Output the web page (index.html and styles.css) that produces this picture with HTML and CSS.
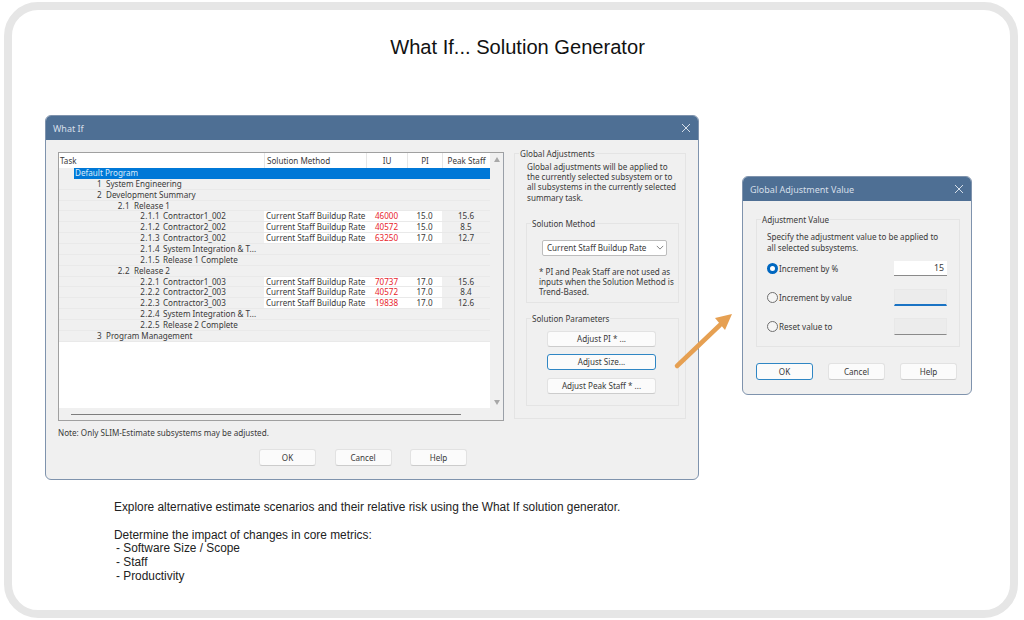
FILE: index.html
```html
<!DOCTYPE html>
<html lang="en">
<head>
    <meta charset="UTF-8">
    <title>What If... Solution Generator</title>
    <link rel="stylesheet" href="styles.css">
</head>
<body>
    <div class="frame">
        <h1>What If... Solution Generator</h1>

        <div class="window what-if">
            <div class="titlebar">
                <span>What If</span>
                <svg class="close" viewBox="0 0 10 10"><path d="M1 1L9 9M9 1L1 9"/></svg>
            </div>
            <div class="what-if-body">
                <div class="list-column">
                    <div class="listbox">
                        <div class="list-main">
                            <div class="row head">
                                <div class="c-task">Task</div>
                                <div class="c-method">Solution Method</div>
                                <div class="c-iu">IU</div>
                                <div class="c-pi">PI</div>
                                <div class="c-staff">Peak Staff</div>
                            </div>
                            <div class="row selected"><div class="c-task"><span class="sel-label">Default Program</span></div></div>
                            <div class="row"><div class="c-task l1"><span class="num">1</span>System Engineering</div></div>
                            <div class="row"><div class="c-task l1"><span class="num">2</span>Development Summary</div></div>
                            <div class="row"><div class="c-task l2"><span class="num">2.1</span>Release 1</div></div>
                            <div class="row data"><div class="c-task l3"><span class="num">2.1.1</span>Contractor1_002</div><div class="c-method">Current Staff Buildup Rate</div><div class="c-iu">46000</div><div class="c-pi">15.0</div><div class="c-staff">15.6</div></div>
                            <div class="row data"><div class="c-task l3"><span class="num">2.1.2</span>Contractor2_002</div><div class="c-method">Current Staff Buildup Rate</div><div class="c-iu">40572</div><div class="c-pi">15.0</div><div class="c-staff">8.5</div></div>
                            <div class="row data"><div class="c-task l3"><span class="num">2.1.3</span>Contractor3_002</div><div class="c-method">Current Staff Buildup Rate</div><div class="c-iu">63250</div><div class="c-pi">17.0</div><div class="c-staff">12.7</div></div>
                            <div class="row"><div class="c-task l3"><span class="num">2.1.4</span>System Integration &amp; T...</div></div>
                            <div class="row"><div class="c-task l3"><span class="num">2.1.5</span>Release 1 Complete</div></div>
                            <div class="row"><div class="c-task l2"><span class="num">2.2</span>Release 2</div></div>
                            <div class="row data"><div class="c-task l3"><span class="num">2.2.1</span>Contractor1_003</div><div class="c-method">Current Staff Buildup Rate</div><div class="c-iu">70737</div><div class="c-pi">17.0</div><div class="c-staff">15.6</div></div>
                            <div class="row data"><div class="c-task l3"><span class="num">2.2.2</span>Contractor2_003</div><div class="c-method">Current Staff Buildup Rate</div><div class="c-iu">40572</div><div class="c-pi">17.0</div><div class="c-staff">8.4</div></div>
                            <div class="row data"><div class="c-task l3"><span class="num">2.2.3</span>Contractor3_003</div><div class="c-method">Current Staff Buildup Rate</div><div class="c-iu">19838</div><div class="c-pi">17.0</div><div class="c-staff">12.6</div></div>
                            <div class="row"><div class="c-task l3"><span class="num">2.2.4</span>System Integration &amp; T...</div></div>
                            <div class="row"><div class="c-task l3"><span class="num">2.2.5</span>Release 2 Complete</div></div>
                            <div class="row"><div class="c-task l1"><span class="num">3</span>Program Management</div></div>
                            <div class="list-empty"></div>
                            <div class="hscroll"><div class="hscroll-thumb"></div></div>
                        </div>
                        <div class="vscroll">
                            <span class="arrow-up"></span>
                            <span class="arrow-down"></span>
                        </div>
                    </div>
                    <p class="note">Note: Only SLIM-Estimate subsystems may be adjusted.</p>
                </div>

                <fieldset class="group global">
                    <legend>Global Adjustments</legend>
                    <p class="global-text">Global adjustments will be applied to the currently selected subsystem or to all subsystems in the currently selected summary task.</p>
                    <fieldset class="group method">
                        <legend>Solution Method</legend>
                        <div class="select">
                            <span>Current Staff Buildup Rate</span>
                            <svg class="chevron" viewBox="0 0 10 6"><path d="M1 1L5 5L9 1"/></svg>
                        </div>
                        <p class="method-text">* PI and Peak Staff are not used as inputs when the Solution Method is Trend-Based.</p>
                    </fieldset>
                    <fieldset class="group params">
                        <legend>Solution Parameters</legend>
                        <div class="btn wide">Adjust PI * ...</div>
                        <div class="btn wide focus">Adjust Size...</div>
                        <div class="btn wide">Adjust Peak Staff * ...</div>
                    </fieldset>
                </fieldset>
            </div>
            <div class="what-if-buttons">
                <div class="btn">OK</div>
                <div class="btn">Cancel</div>
                <div class="btn">Help</div>
            </div>
        </div>

        <svg class="pointer" viewBox="0 0 70 64">
            <path class="pointer-line" d="M5 60L48 19"/>
            <path class="pointer-head" d="M60 8L53 24L43 12Z"/>
        </svg>

        <div class="window adjust">
            <div class="titlebar">
                <span>Global Adjustment Value</span>
                <svg class="close" viewBox="0 0 10 10"><path d="M1 1L9 9M9 1L1 9"/></svg>
            </div>
            <fieldset class="group value-group">
                <legend>Adjustment Value</legend>
                <p class="value-text">Specify the adjustment value to be applied to all selected subsystems.</p>
                <div class="option">
                    <span class="radio on"></span>
                    <span class="option-label">Increment by %</span>
                    <span class="input">15</span>
                </div>
                <div class="option">
                    <span class="radio"></span>
                    <span class="option-label">Increment by value</span>
                    <span class="input empty active"></span>
                </div>
                <div class="option">
                    <span class="radio"></span>
                    <span class="option-label">Reset value to</span>
                    <span class="input empty"></span>
                </div>
            </fieldset>
            <div class="adjust-buttons">
                <div class="btn focus">OK</div>
                <div class="btn">Cancel</div>
                <div class="btn">Help</div>
            </div>
        </div>

        <div class="caption">
            <p>Explore alternative estimate scenarios and their relative risk using the What If solution generator.</p>
            <p>Determine the impact of changes in core metrics:</p>
            <ul>
                <li>- Software Size / Scope</li>
                <li>- Staff</li>
                <li>- Productivity</li>
            </ul>
        </div>
    </div>
</body>
</html>
```

FILE: styles.css
```css
html, body {
    margin: 0;
    padding: 0;
    background-color: white;
    overflow: hidden;
}
.frame {
    position: relative;
    box-sizing: border-box;
    width: 1014px;
    height: 616px;
    margin: 2px 0 0 4px;
    border: 8px solid #e6e6e6;
    border-radius: 34px;
    font-family: "Liberation Sans", Arial, sans-serif;
    color: #111;
}
h1 {
    margin: 25px 0 0;
    padding-left: 13px;
    font-size: 20.1px;
    font-weight: 400;
    line-height: 24px;
    text-align: center;
}
/* windows sit on the slide like a desktop, frame inner corner is 12,10 */
.window {
    position: absolute;
    box-sizing: border-box;
    background-color: #f0f0f0;
    border: 1px solid #7f93ad;
    border-radius: 6px;
    font-family: "Noto Sans", sans-serif;
    font-size: 8.1px;
    color: #3a3a3a;
    overflow: hidden;
}
.what-if {
    left: 33px;
    top: 105px;
    width: 654px;
    height: 365px;
}
.adjust {
    left: 730px;
    top: 166px;
    width: 230px;
    height: 219px;
}
.titlebar {
    display: flex;
    justify-content: space-between;
    align-items: center;
    height: 24px;
    padding: 0 7px;
    background-color: #4e6f94;
    color: #d6dfe9;
    font-size: 9px;
}
.close {
    width: 10px;
    height: 10px;
    fill: none;
    stroke: #d6dfe9;
    stroke-width: 1;
}
.what-if-body {
    display: flex;
    padding: 12px 12px 0 12px;
    gap: 10px;
}
.list-column {
    width: 446px;
}
.listbox {
    display: flex;
    box-sizing: border-box;
    height: 269px;
    border: 1px solid #a0a0a0;
    border-right-color: #9aa0a8;
    background-color: white;
}
.list-main {
    display: flex;
    flex-direction: column;
    width: 431px;
}
.row {
    display: flex;
    flex: none;
    height: 10.87px;
    line-height: 10.6px;
    background-color: #f0f0f0;
    border-bottom: 1px solid #e9e9e9;
    box-sizing: border-box;
    white-space: nowrap;
}
.row.head {
    height: 15px;
    line-height: 15px;
    background-color: white;
    border-bottom: none;
}
.row.head > div + div {
    border-left: 1px solid #e6e6e6;
}
.c-task {
    box-sizing: border-box;
    width: 205px;
    padding-left: 1px;
}
.c-method {
    box-sizing: border-box;
    width: 102px;
    padding-left: 2px;
}
.c-iu, .c-pi, .c-staff {
    box-sizing: border-box;
    text-align: center;
}
.c-iu { width: 41px; }
.c-pi { width: 35px; }
.c-staff { width: 48px; }
.data .c-method, .data .c-iu, .data .c-pi {
    background-color: white;
}
.data .c-iu {
    color: #e8242c;
}
.selected {
    border-bottom: none;
}
.selected .c-task {
    width: 431px;
    padding-left: 15px;
}
.sel-label {
    display: block;
    background-color: #0078d7;
    color: #d9ecfb;
    padding-left: 1px;
}
.num {
    display: inline-block;
    text-align: right;
    margin-right: 4px;
    letter-spacing: 0.3px;
}
.l1 .num { width: 42px; }
.l2 .num { width: 70px; }
.l3 .num { width: 100px; margin-right: 3px; }
.list-empty {
    flex: 1;
    background-color: white;
}
.hscroll {
    display: flex;
    align-items: center;
    flex: none;
    height: 12px;
    padding-left: 12px;
    background-color: #f0f0f0;
}
.hscroll-thumb {
    width: 390px;
    height: 1px;
    background-color: #7d7d7d;
}
.vscroll {
    display: flex;
    flex-direction: column;
    justify-content: space-between;
    align-items: center;
    flex: 1;
    padding: 4px 0 15px;
    background-color: #f0f0f0;
}
.arrow-up, .arrow-down {
    width: 0;
    height: 0;
    border-left: 3.5px solid transparent;
    border-right: 3.5px solid transparent;
}
.arrow-up { border-bottom: 5px solid #a8a8a8; }
.arrow-down { border-top: 5px solid #a8a8a8; }
.note {
    margin: 6px 0 0;
    line-height: 12px;
}
.group {
    margin: 0;
    padding: 0;
    border: 1px solid #e4e4e4;
    min-width: 0;
}
.group legend {
    margin-left: 4px;
    padding: 0 1px;
    font-size: 8.1px;
    line-height: 11px;
}
.group.global > legend {
    margin-left: -7px;
}
.group.params > legend {
    margin-left: -16px;
}
.global {
    box-sizing: border-box;
    flex: none;
    width: 172px;
    height: 271px;
    margin-top: -4px;
    padding: 0 0 0 11px;
}
.global-text {
    margin: 3px 0 0 1px;
    line-height: 10.2px;
    width: 152px;
}
.method, .params {
    width: 153px;
    box-sizing: border-box;
}
.method {
    height: 85px;
    margin-top: 15px;
}
.select {
    display: flex;
    justify-content: space-between;
    align-items: center;
    box-sizing: border-box;
    width: 125px;
    height: 16px;
    margin: 11px 0 0 15px;
    padding: 0 2px 0 4px;
    background-color: white;
    border: 1px solid #bdbdbd;
    border-radius: 2px;
}
.chevron {
    width: 8px;
    height: 5px;
    fill: none;
    stroke: #666;
}
.method-text {
    margin: 11px 0 0 12px;
    width: 138px;
    line-height: 10.2px;
}
.params {
    height: 93px;
    margin-top: 10px;
    display: flex;
    flex-direction: column;
    align-items: flex-start;
    gap: 7.5px;
    padding: 7px 0 0 20px;
}
.btn {
    box-sizing: border-box;
    width: 57px;
    height: 17px;
    line-height: 15px;
    text-align: center;
    background-color: #fbfbfb;
    border: 1px solid #e2e2e2;
    border-bottom-color: #cccccc;
    border-radius: 3px;
    white-space: nowrap;
}
.btn.wide {
    width: 109px;
    height: 16px;
    line-height: 14px;
}
.btn.focus {
    border: 1px solid #2f86c4;
}
.what-if-buttons {
    display: flex;
    gap: 18.5px;
    margin: 10px 0 0 213px;
}
.value-group {
    box-sizing: border-box;
    width: 204px;
    height: 133px;
    margin: 13px 0 0 13px;
    padding: 0 0 0 10px;
}
.group.value-group > legend {
    margin-left: -6px;
}
.value-text {
    margin: 7px 0 1px;
    width: 175px;
    line-height: 10.5px;
}
.option {
    display: flex;
    align-items: center;
    height: 29px;
}
.radio {
    box-sizing: border-box;
    width: 11px;
    height: 11px;
    margin-right: 1px;
    border: 1px solid #707070;
    border-radius: 50%;
    background-color: #f5f5f5;
}
.radio.on {
    border: 3px solid #0067c0;
    background-color: white;
}
.option-label {
    width: 115px;
}
.input {
    box-sizing: border-box;
    width: 53px;
    height: 15px;
    padding-right: 3px;
    text-align: right;
    line-height: 14px;
    background-color: white;
    border-bottom: 1px solid #8a8a8a;
    font-size: 8.8px;
}
.input.empty {
    height: 17px;
    background-color: #ececec;
    border: 1px solid #e8e8e8;
    border-bottom: 1px solid #8a8a8a;
}
.input.active {
    border-bottom: 2px solid #1a73c4;
}
.adjust-buttons {
    display: flex;
    gap: 15px;
    margin: 16px 0 0 13px;
}
.pointer {
    position: absolute;
    left: 660px;
    top: 296px;
    width: 70px;
    height: 64px;
}
.pointer-line {
    fill: none;
    stroke: #e6a052;
    stroke-width: 4.5;
    stroke-linecap: round;
}
.pointer-head {
    fill: #e6a052;
}
.caption {
    position: absolute;
    left: 102px;
    top: 491px;
    font-size: 11.86px;
    line-height: 13.7px;
    color: #222;
}
.caption p {
    margin: 0 0 14px;
}
.caption p:nth-child(2) {
    margin-bottom: 0;
}
.caption ul {
    margin: 0;
    padding: 0 0 0 2px;
    list-style: none;
}
```
